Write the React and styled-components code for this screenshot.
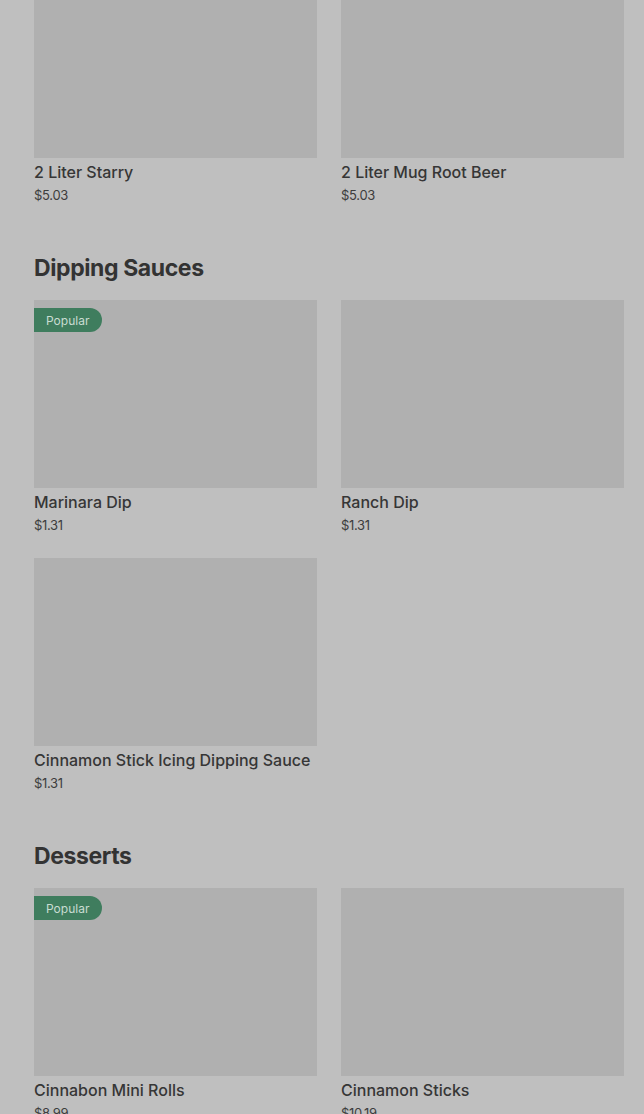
import React from 'react';
import styled, { createGlobalStyle } from 'styled-components';

const GlobalStyle = createGlobalStyle`
  html, body {
    margin: 0;
    padding: 0;
    background: #bfbfbf;
    font-family: 'Inter', 'Liberation Sans', sans-serif;
    overflow: hidden;
  }
`;

const Page = styled.div`
  padding: 0 20px 0 34px;
  margin-top: -30px;
  height: 1144px;
  overflow: hidden;
`;

const Section = styled.section`
  padding-bottom: 48px;
`;

const SectionTitle = styled.h2`
  margin: 0 0 16px;
  font-size: 23px;
  line-height: 32px;
  font-weight: 700;
  letter-spacing: -0.4px;
  color: #333333;
`;

const Grid = styled.div`
  display: grid;
  grid-template-columns: 1fr 1fr;
  column-gap: 24px;
  row-gap: 24px;
`;

const Card = styled.div`
  display: flex;
  flex-direction: column;
`;

const Thumb = styled.div`
  position: relative;
  height: 188px;
  background: #b0b0b0;
`;

const Badge = styled.span`
  position: absolute;
  top: 8px;
  left: 0;
  height: 24px;
  padding: 0 13px 0 12px;
  display: flex;
  align-items: center;
  background: #3f7d5e;
  color: #c9dcd2;
  font-size: 12px;
  border-radius: 0 12px 12px 0;
`;

const Name = styled.div`
  margin-top: 4px;
  font-size: 16px;
  line-height: 20px;
  font-weight: 500;
  color: #363636;
  white-space: nowrap;
`;

const Price = styled.div`
  margin-top: 4px;
  font-size: 13px;
  line-height: 18px;
  color: #3d3d3d;
  letter-spacing: -0.3px;
`;

const sections = [
  {
    items: [
      { name: '2 Liter Starry', price: '$5.03' },
      { name: '2 Liter Mug Root Beer', price: '$5.03' },
    ],
  },
  {
    title: 'Dipping Sauces',
    items: [
      { name: 'Marinara Dip', price: '$1.31', popular: true },
      { name: 'Ranch Dip', price: '$1.31' },
      { name: 'Cinnamon Stick Icing Dipping Sauce', price: '$1.31' },
    ],
  },
  {
    title: 'Desserts',
    items: [
      { name: 'Cinnabon Mini Rolls', price: '$8.99', popular: true },
      { name: 'Cinnamon Sticks', price: '$10.19' },
    ],
  },
];

const App = () => (
  <>
    <GlobalStyle />
    <Page>
      {sections.map((section, i) => (
        <Section key={i}>
          {section.title && <SectionTitle>{section.title}</SectionTitle>}
          <Grid>
            {section.items.map((item) => (
              <Card key={item.name}>
                <Thumb>{item.popular && <Badge>Popular</Badge>}</Thumb>
                <Name>{item.name}</Name>
                <Price>{item.price}</Price>
              </Card>
            ))}
          </Grid>
        </Section>
      ))}
    </Page>
  </>
);

export default App;
